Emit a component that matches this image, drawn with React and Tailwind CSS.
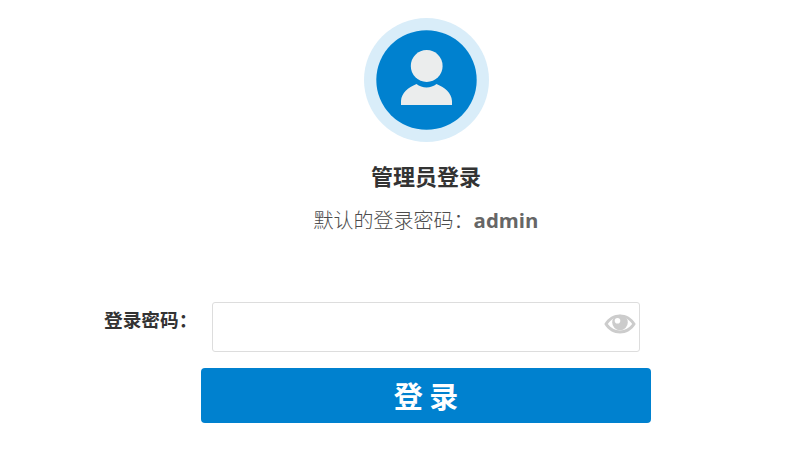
function Avatar() {
  return (
    <svg className="block h-[125px] w-[125px]" viewBox="0 0 125 125" role="img">
      <ellipse cx="62.5" cy="62" rx="62.5" ry="62" fill="#d9edf9" />
      <ellipse cx="62.5" cy="62" rx="50.2" ry="49.7" fill="#0081cf" />
      <path d="M37 87 V83 C37.500 75 44 69.500 52.500 66 C58 70.500 67 70.500 72.500 66 C81 69.500 87.500 75 88 83 V87 Z" fill="#ebeded" />
      <circle cx="62.700" cy="48" r="15.900" fill="#ebeded" />
    </svg>
  );
}

function Eye() {
  return (
    <svg className="mt-[11px] h-5 w-8" viewBox="0 0 32 20" fill="none">
      <path
        fillRule="evenodd"
        d="M.3 10 C4 3.500 10 .5 16 .5 S28 3.500 31.700 10 C28 16.500 22 19.500 16 19.500 S4 16.500 .3 10Z M3.800 10 C7 14.300 11 16.500 16 16.500 S25 14.300 28.200 10 C26.500 7.500 24.500 5.500 21.500 4.200 H10.500 C7.500 5.500 5.500 7.500 3.800 10Z"
        fill="#cccccc"
      />
      <circle cx="16" cy="8.500" r="7.800" fill="#cccccc" />
      <circle cx="13.500" cy="6.800" r="2.800" fill="#fff" />
    </svg>
  );
}

export default function App() {
  return (
    <main className="flex h-[462px] w-[812px] flex-col bg-white pt-[18px] font-['Noto_Sans_CJK_SC',sans-serif]">
      <header className="flex w-[852px] flex-col items-center">
        <Avatar />
        <h1 className="mt-[15px] text-[22px] leading-[34px] font-bold text-[#333]">管理员登录</h1>
        <p className="mt-[13px] flex items-baseline text-[20px] leading-[30px] text-[#666]">
          <span className="font-light text-[#4c4c4c]">默认的登录密码：</span>
          <b className="font-['Open_Sans',sans-serif] text-[20.4px]">admin</b>
        </p>
      </header>
      <form className="mt-[67px]">
        <div className="flex h-[50px]">
          <label className="ml-[104px] w-[108px] pt-[3px] text-[18.7px] leading-[28px] font-bold text-[#333]">登录密码：</label>
          <div className="flex w-[428px] items-start justify-end rounded-[3px] border border-[#ddd] pr-[3px]">
            <Eye />
          </div>
        </div>
        <button type="button" className="mt-4 ml-[201px] block h-[55px] w-[450px] rounded-[4px] bg-[#0081cf] pt-px text-[29px] font-bold text-white">登 录</button>
      </form>
    </main>
  );
}
